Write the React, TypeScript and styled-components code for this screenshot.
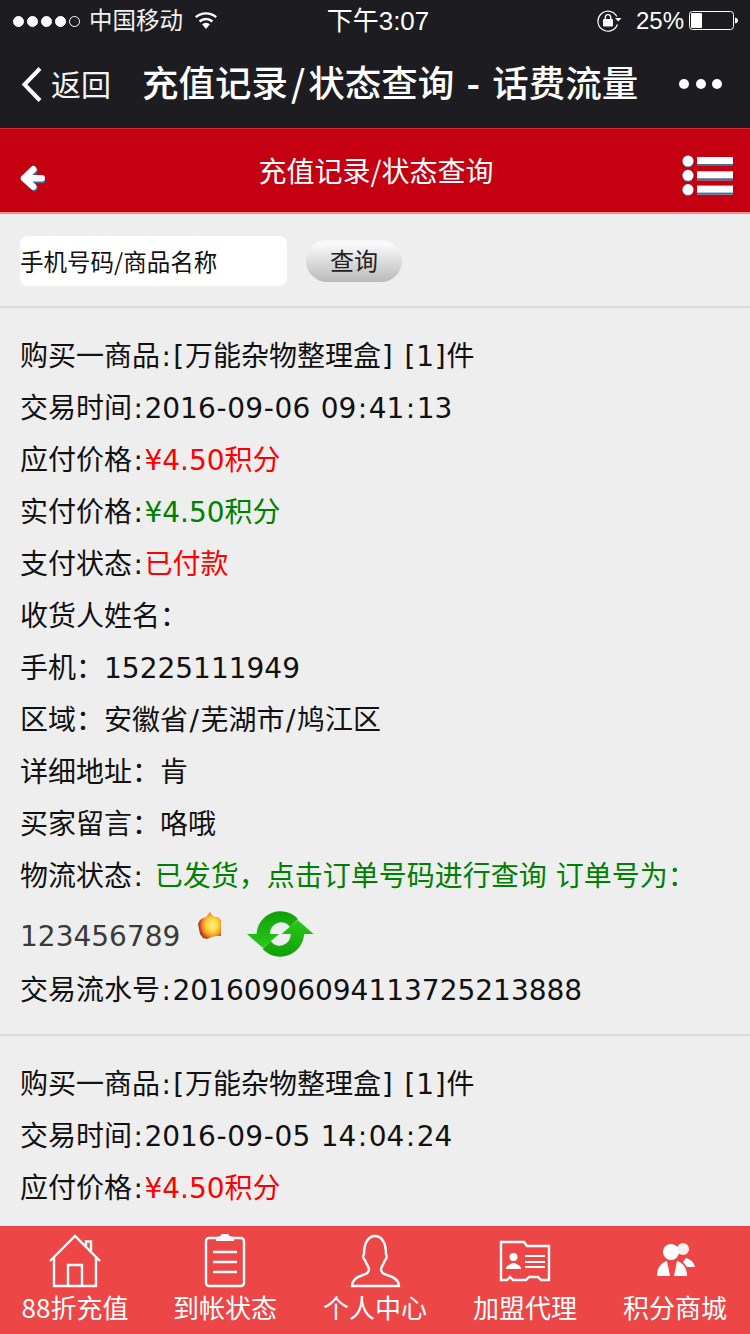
import React from 'react';
import styled, {createGlobalStyle} from 'styled-components';

const GlobalStyle = createGlobalStyle`
    html, body {
        margin: 0;
        padding: 0;
        background: #eeeeee;
    }
    * {
        box-sizing: border-box;
    }
`;

const BODY_FONT = `"DejaVu Sans", "Noto Sans CJK SC", sans-serif`;
const CJK_FONT = `"Noto Sans CJK SC", sans-serif`;

const Page = styled.div`
    width: 750px;
    height: 1334px;
    display: flex;
    flex-direction: column;
    overflow: hidden;
    background: #eeeeee;
    font-family: ${BODY_FONT};
    color: #111;
`;

const StatusBar = styled.div`
    height: 40px;
    flex: none;
    display: grid;
    grid-template-columns: 1fr auto 1fr;
    align-items: center;
    padding: 0 12px 0 13px;
    background: #1c1c21;
    color: #fff;
    font-family: "Liberation Sans", ${CJK_FONT};
`;

const StatusGroup = styled.div<{$end?: boolean}>`
    display: flex;
    align-items: center;
    justify-content: ${({$end}) => ($end ? 'flex-end' : 'flex-start')};
`;

const Signal = styled.div`
    display: flex;
    gap: 3px;
    margin-right: 9px;
`;

const SignalDot = styled.span<{$off?: boolean}>`
    width: 11px;
    height: 11px;
    border-radius: 50%;
    border: 1px solid #fff;
    background: ${({$off}) => ($off ? 'transparent' : '#fff')};
`;

const Carrier = styled.span`
    font-size: 23.5px;
    margin: 0 11px 4px 0;
    color: #f2f2f2;
`;

const WifiSvg = styled.svg`
    margin-bottom: 3px;
`;

const Clock = styled.span`
    font-size: 26px;
    margin: 0 0 5px 5px;
`;

const Percent = styled.span`
    font-size: 24px;
    margin: 0 5px 0 14px;
`;

const NavBar = styled.div`
    height: 88px;
    flex: none;
    display: flex;
    align-items: center;
    padding: 0 28px 0 21px;
    background: #1c1c21;
    color: #fff;
`;

const BackLabel = styled.span`
    font-family: ${CJK_FONT};
    font-size: 30px;
    margin: 0 0 2px 8px;
    color: #f4f4f4;
`;

const NavTitle = styled.div`
    flex: 1;
    margin: 0 0 6px 31px;
    font-family: ${CJK_FONT};
    font-size: 36.5px;
    font-weight: 500;
    white-space: pre;
    word-spacing: 4px;
`;

const TitleSlash = styled.span`
    margin: 0 3px;
`;

const TitleDash = styled.span`
    font-weight: 700;
`;

const NavDots = styled.div`
    display: flex;
    gap: 6.5px;
`;

const NavDot = styled.span`
    width: 10px;
    height: 10px;
    border-radius: 50%;
    background: #fff;
`;

const RedHeader = styled.div`
    height: 86px;
    flex: none;
    display: grid;
    grid-template-columns: 1fr auto 1fr;
    align-items: center;
    padding: 0 17px 0 19px;
    background: #c40011;
    border-top: 1px solid #d52b35;
    border-bottom: 2px solid #ef8f8f;
    color: #fff;
`;

const BackArrowSvg = styled.svg`
    margin-top: 16px;
`;

const MenuSvg = styled.svg`
    justify-self: end;
    margin-top: 10px;
`;

const HeaderTitle = styled.div`
    font-family: ${CJK_FONT};
    font-size: 28px;
    margin-top: -1px;
`;

const SearchBar = styled.div`
    height: 94px;
    flex: none;
    display: flex;
    align-items: center;
    padding: 2px 20px 0;
    gap: 19px;
    border-bottom: 2px solid #d9d9d9;
`;

const SearchInput = styled.div`
    width: 267px;
    height: 50px;
    display: flex;
    align-items: center;
    padding-bottom: 1px;
    border-radius: 8px;
    background: #fff;
    font-family: ${CJK_FONT};
    font-size: 23.5px;
    color: #111;
`;

const SearchButton = styled.div`
    width: 96px;
    height: 42px;
    display: flex;
    align-items: center;
    justify-content: center;
    padding-bottom: 3px;
    border-radius: 21px;
    background: linear-gradient(#f6f6f6, #fbfbfb 8%, #b9b9b9);
    font-family: ${CJK_FONT};
    font-size: 24px;
    color: #222;
`;

const Content = styled.div`
    flex: 1;
    overflow: hidden;
`;

const Order = styled.div`
    padding: 20px 20px 20px;
    border-bottom: 2px solid #d9d9d9;
`;

const Row = styled.div<{$tracking?: boolean}>`
    height: ${({$tracking}) => ($tracking ? '62px' : '52px')};
    padding-top: ${({$tracking}) => ($tracking ? '10px' : '0')};
    display: flex;
    align-items: center;
    font-size: 28px;
    white-space: pre;
    color: #111;
`;

const Value = styled.span<{$tone: 'red' | 'green'}>`
    color: ${({$tone}) => ($tone === 'red' ? '#ff0000' : '#008000')};
`;

// ascii punctuation runs wider in the reference than in DejaVu
const Punct = styled.span<{$wide?: boolean}>`
    margin: 0 ${({$wide}) => ($wide ? '1.5px' : '0.75px')};
`;

const TrackingNumber = styled.span`
    color: #3a3a3a;
    margin-right: 18px;
`;

const FireSvg = styled.svg`
    margin: -21px 26px 0 0;
    filter: blur(0.5px);
`;

const RefreshSvg = styled.svg`
    margin-top: -4px;
`;

const TabBar = styled.div`
    height: 109px;
    flex: none;
    display: grid;
    grid-template-columns: repeat(5, 1fr);
    background: #ec4646;
    border-top: 1px solid #e9e9e9;
`;

const Tab = styled.div`
    display: flex;
    flex-direction: column;
    align-items: center;
    padding-top: 8px;
    color: #fff;
`;

const TabIcon = styled.svg`
    width: 60px;
    height: 54px;
    flex: none;
    filter: blur(0.5px);
`;

const TabLabel = styled.span`
    font-family: ${CJK_FONT};
    font-size: 26px;
    line-height: 34px;
    margin-top: 2px;
`;

const BackArrow = () => (
    <BackArrowSvg width="26" height="28" viewBox="0 0 26 28">
        <g fill="none" stroke="#3f6f9a" strokeWidth="6.500" strokeLinecap="round" strokeLinejoin="round" transform="translate(1.2 1.6)">
            <path d="M14.300 4.300 5 13.300l9.300 8.300M5 13.300h17.700"/>
        </g>
        <g fill="none" stroke="#fff" strokeWidth="6.500" strokeLinecap="round" strokeLinejoin="round">
            <path d="M14.300 4.300 5 13.300l9.300 8.300M5 13.300h17.700"/>
        </g>
    </BackArrowSvg>
);

const MenuIcon = () => (
    <MenuSvg width="51" height="42" viewBox="0 0 51 42">
        {[0, 14.3, 28.6].map(y => (
            <g key={y}>
                <circle cx="6" cy={7 + y} r="5.500" fill="#3f6f9a"/>
                <circle cx="6" cy={6 + y} r="5.500" fill="#fff"/>
                <rect x="15" y={2 + y} width="36" height="9" fill="#fff"/>
                <rect x="15" y={9 + y} width="36" height="2" fill="#3f6f9a"/>
            </g>
        ))}
    </MenuSvg>
);

const WifiIcon = () => (
    <WifiSvg width="24" height="18" viewBox="0 0 24 18">
        <path d="M12 18 8 13.200a6 6 0 0 1 8 0z" fill="#fff"/>
        <path d="M5.600 10.500a9.600 9.600 0 0 1 12.800 0" fill="none" stroke="#fff" strokeWidth="2.400"/>
        <path d="M1.800 6.200a15.400 15.400 0 0 1 20.400 0" fill="none" stroke="#fff" strokeWidth="2.400"/>
    </WifiSvg>
);

const RotationLockIcon = () => (
    <svg width="25" height="22" viewBox="0 0 25 22">
        <path d="M20.400 14.500A10 10 0 1 1 19.800 6.500" fill="none" stroke="#fff" strokeWidth="1.200"/>
        <path d="M18 8h6.500l-3.200 3.600z" fill="#fff"/>
        <rect x="6" y="9" width="10" height="7.500" rx="1" fill="#fff"/>
        <path d="M8.300 9V7.300a2.700 2.700 0 0 1 5.400 0V9" fill="none" stroke="#fff" strokeWidth="1.400"/>
    </svg>
);

const BatteryIcon = () => (
    <svg width="49" height="20" viewBox="0 0 49 20">
        <rect x="0.500" y="0.500" width="44" height="18" rx="3" fill="none" stroke="#fff"/>
        <rect x="2" y="2" width="11" height="15" rx="1" fill="#fff"/>
        <path d="M46 6.500c1.800.3 3 1.500 3 3s-1.200 2.700-3 3z" fill="#fff"/>
    </svg>
);

const ChevronIcon = () => (
    <svg width="22" height="37" viewBox="0 0 22 37">
        <path d="M19 2.500 3.500 18.500 19 34.500" fill="none" stroke="#fff" strokeWidth="4"/>
    </svg>
);

const Fire = () => (
    <FireSvg width="23" height="27" viewBox="0 0 23 27">
        <defs>
            <radialGradient id="fireGlow" cx="0.620" cy="0.480" r="0.640">
                <stop offset="0" stopColor="#fff37a"/>
                <stop offset="0.400" stopColor="#ffd23e"/>
                <stop offset="0.680" stopColor="#f08a2a"/>
                <stop offset="0.840" stopColor="#c04a1e"/>
                <stop offset="1" stopColor="#8c2f1a"/>
            </radialGradient>
        </defs>
        <path d="M12 0 14 3 17 5 20 5 23 8V24H18L14 25 9 27 5 26 2 22 1 17 0 12 2 8 5 6 8 5z" fill="url(#fireGlow)"/>
    </FireSvg>
);

const Refresh = () => (
    <RefreshSvg width="67" height="49" viewBox="0 0 67 49">
        <defs>
            <linearGradient id="refreshArc" x1="0" y1="0" x2="0" y2="1">
                <stop offset="0" stopColor="#0f9f08"/>
                <stop offset="1" stopColor="#27cb1a"/>
            </linearGradient>
        </defs>
        <g fill="url(#refreshArc)">
            <path d="M51 9A24 24 0 0 0 9.500 24H0L16 38 32 24H23A11 11 0 0 1 43 17z"/>
            <path d="M51 9A24 24 0 0 0 9.500 24H0L16 38 32 24H23A11 11 0 0 1 43 17z" transform="rotate(180 33.300 24)"/>
        </g>
    </RefreshSvg>
);

const HomeGlyph = () => (
    <TabIcon viewBox="0 0 60 54">
        <g fill="none" stroke="#fff" strokeWidth="2.400">
            <path d="M5 27 30 2l25 25"/>
            <path d="M9 23v29h42V23"/>
            <path d="M23 52V31h14v21"/>
            <path d="M41 12V7.500h5V17"/>
        </g>
    </TabIcon>
);

const ClipboardGlyph = () => (
    <TabIcon viewBox="0 0 60 54">
        <g fill="none" stroke="#fff" strokeWidth="2.400">
            <rect x="11" y="4" width="38" height="48" rx="3"/>
            <path d="M18 18h24M18 28h24M18 38h24"/>
        </g>
        <path d="M21 3c3 0 5-1 6-3h6c1 2 3 3 6 3v4H21z" fill="#fff"/>
    </TabIcon>
);

const PersonGlyph = () => (
    <TabIcon viewBox="0 0 60 54">
        <path
            d="M7 52c0-6 4-9 11-11 4-1 6-3 6-6 0-2-3-5-4-9-2-1-2-4-1-6 0-12 5-18 11-18s11 6 11 18c1 2 1 5-1 6-1 4-4 7-4 9 0 3 2 5 6 6 7 2 12 5 12 11z"
            fill="none"
            stroke="#fff"
            strokeWidth="2.400"
        />
    </TabIcon>
);

const CardGlyph = () => (
    <TabIcon viewBox="0 0 60 54">
        <path
            d="M6 8h23l3 4h22v34h-8l-3-3H34l-3 3H18l-3-3-3 3H6z"
            fill="none"
            stroke="#fff"
            strokeWidth="2.400"
        />
        <circle cx="18.500" cy="23" r="4" fill="#fff"/>
        <path d="M11 35c0-4 4-4 6-6h3c2 2 6 2 6 6z" fill="#fff"/>
        <path d="M30 22h20M30 28h20M30 33h20" stroke="#fff" strokeWidth="2"/>
    </TabIcon>
);

const GroupGlyph = () => (
    <TabIcon viewBox="0 0 60 54">
        <circle cx="38" cy="15" r="6" fill="#fff" opacity="0.9"/>
        <path d="M41 24c4 1 8 4 9 9h-8l-4-5z" fill="#fff"/>
        <circle cx="26" cy="18" r="8" fill="#fff"/>
        <path d="M12 42c0-8 4-13 10-15l3 15zM42 42c0-8-4-13-10-15l-3 15z" fill="#fff"/>
    </TabIcon>
);

type OrderLine = {label: string; value?: string; tone?: 'red' | 'green'};

const firstOrderTop: OrderLine[] = [
    {label: '购买一商品:[万能杂物整理盒] [1]件'},
    {label: '交易时间:2016-09-06 09:41:13'},
    {label: '应付价格:', value: '¥4.50积分', tone: 'red'},
    {label: '实付价格:', value: '¥4.50积分', tone: 'green'},
    {label: '支付状态:', value: '已付款', tone: 'red'},
    {label: '收货人姓名：'},
    {label: '手机：15225111949'},
    {label: '区域：安徽省/芜湖市/鸠江区'},
    {label: '详细地址：肯'},
    {label: '买家留言：咯哦'},
    {label: '物流状态: ', value: '已发货，点击订单号码进行查询 订单号为：', tone: 'green'},
];

const secondOrder: OrderLine[] = [
    {label: '购买一商品:[万能杂物整理盒] [1]件'},
    {label: '交易时间:2016-09-05 14:04:24'},
    {label: '应付价格:', value: '¥4.50积分', tone: 'red'},
];

const tabs = [
    {label: '88折充值', icon: <HomeGlyph/>},
    {label: '到帐状态', icon: <ClipboardGlyph/>},
    {label: '个人中心', icon: <PersonGlyph/>},
    {label: '加盟代理', icon: <CardGlyph/>},
    {label: '积分商城', icon: <GroupGlyph/>},
];

const spaced = (text: string) =>
    text.split(/([:/\-\[\] ])/).map((part, i) =>
        i % 2 === 1 ? <Punct key={i} $wide={part === ':' || part === '/'}>{part}</Punct> : part
    );

const Lines = ({lines}: {lines: OrderLine[]}) => (
    <>
        {lines.map((line, i) => (
            <Row key={i}>
                <span>{spaced(line.label)}</span>
                {line.value && line.tone && <Value $tone={line.tone}>{line.value}</Value>}
            </Row>
        ))}
    </>
);

export default function App() {
    return (
        <Page>
            <GlobalStyle/>
            <StatusBar>
                <StatusGroup>
                    <Signal>
                        <SignalDot/>
                        <SignalDot/>
                        <SignalDot/>
                        <SignalDot/>
                        <SignalDot $off/>
                    </Signal>
                    <Carrier>中国移动</Carrier>
                    <WifiIcon/>
                </StatusGroup>
                <Clock>下午3:07</Clock>
                <StatusGroup $end>
                    <RotationLockIcon/>
                    <Percent>25%</Percent>
                    <BatteryIcon/>
                </StatusGroup>
            </StatusBar>
            <NavBar>
                <ChevronIcon/>
                <BackLabel>返回</BackLabel>
                <NavTitle>充值记录<TitleSlash>/</TitleSlash>状态查询 <TitleDash>-</TitleDash> 话费流量</NavTitle>
                <NavDots>
                    <NavDot/>
                    <NavDot/>
                    <NavDot/>
                </NavDots>
            </NavBar>
            <RedHeader>
                <BackArrow/>
                <HeaderTitle>充值记录/状态查询</HeaderTitle>
                <MenuIcon/>
            </RedHeader>
            <SearchBar>
                <SearchInput>手机号码/商品名称</SearchInput>
                <SearchButton>查询</SearchButton>
            </SearchBar>
            <Content>
                <Order>
                    <Lines lines={firstOrderTop}/>
                    <Row $tracking>
                        <TrackingNumber>123456789</TrackingNumber>
                        <Fire/>
                        <Refresh/>
                    </Row>
                    <Row><span>{spaced('交易流水号:20160906094113725213888')}</span></Row>
                </Order>
                <Order>
                    <Lines lines={secondOrder}/>
                </Order>
            </Content>
            <TabBar>
                {tabs.map(tab => (
                    <Tab key={tab.label}>
                        {tab.icon}
                        <TabLabel>{tab.label}</TabLabel>
                    </Tab>
                ))}
            </TabBar>
        </Page>
    );
}
